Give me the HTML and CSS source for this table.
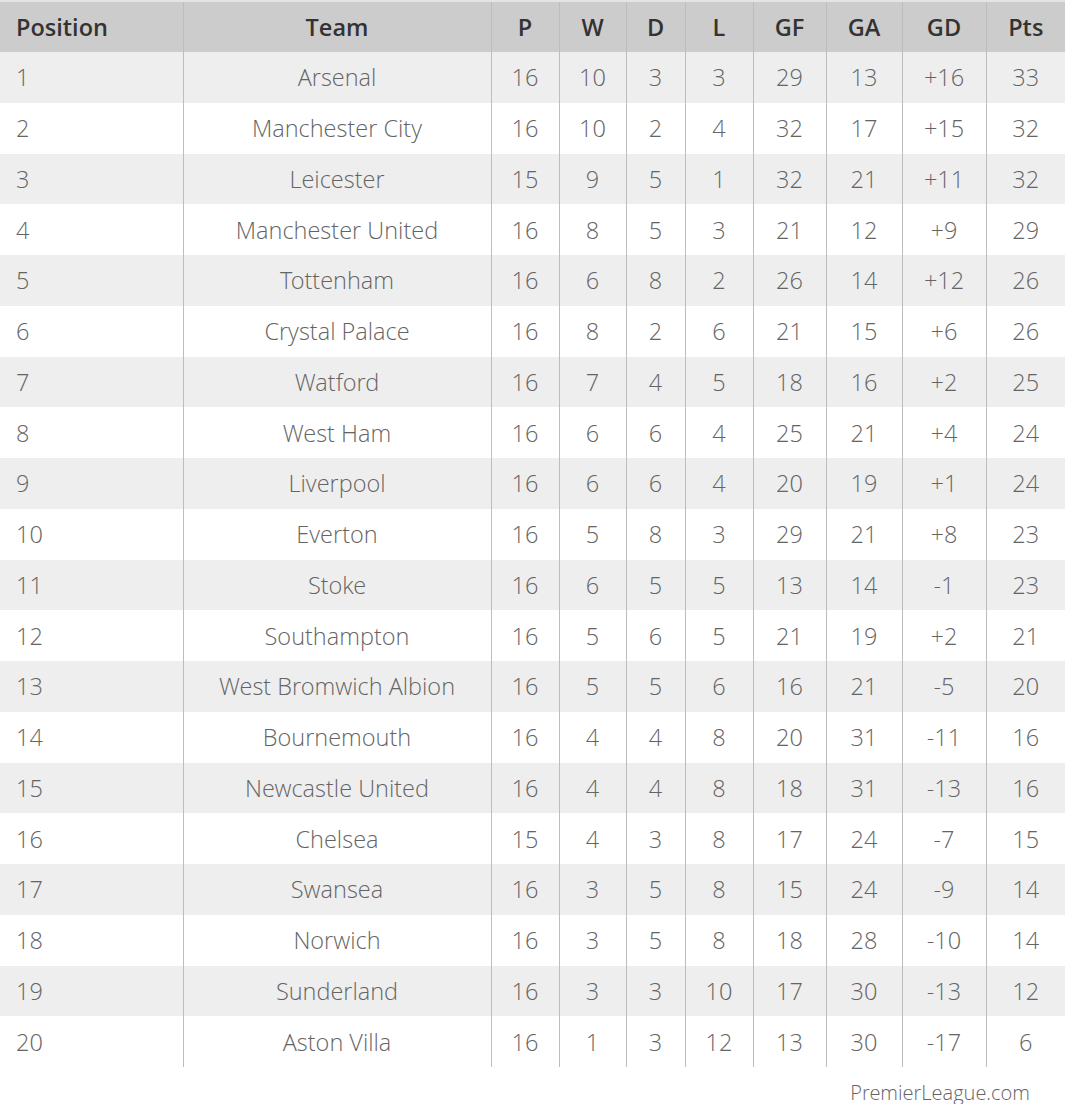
FILE: index.html
```html
<!DOCTYPE html>
<html>
<head>
<meta charset="utf-8">
<link rel="stylesheet" href="styles.css">
</head>
<body>
<table class="standings">
<colgroup>
<col class="c-pos"><col class="c-team"><col class="c-p"><col class="c-w"><col class="c-d"><col class="c-l"><col class="c-gf"><col class="c-ga"><col class="c-gd"><col class="c-pts">
</colgroup>
<thead>
<tr><th class="pos">Position</th><th>Team</th><th>P</th><th>W</th><th>D</th><th>L</th><th>GF</th><th>GA</th><th>GD</th><th>Pts</th></tr>
</thead>
<tbody>
<tr><td class="pos">1</td><td>Arsenal</td><td>16</td><td>10</td><td>3</td><td>3</td><td>29</td><td>13</td><td>+16</td><td>33</td></tr>
<tr><td class="pos">2</td><td>Manchester City</td><td>16</td><td>10</td><td>2</td><td>4</td><td>32</td><td>17</td><td>+15</td><td>32</td></tr>
<tr><td class="pos">3</td><td>Leicester</td><td>15</td><td>9</td><td>5</td><td>1</td><td>32</td><td>21</td><td>+11</td><td>32</td></tr>
<tr><td class="pos">4</td><td>Manchester United</td><td>16</td><td>8</td><td>5</td><td>3</td><td>21</td><td>12</td><td>+9</td><td>29</td></tr>
<tr><td class="pos">5</td><td>Tottenham</td><td>16</td><td>6</td><td>8</td><td>2</td><td>26</td><td>14</td><td>+12</td><td>26</td></tr>
<tr><td class="pos">6</td><td>Crystal Palace</td><td>16</td><td>8</td><td>2</td><td>6</td><td>21</td><td>15</td><td>+6</td><td>26</td></tr>
<tr><td class="pos">7</td><td>Watford</td><td>16</td><td>7</td><td>4</td><td>5</td><td>18</td><td>16</td><td>+2</td><td>25</td></tr>
<tr><td class="pos">8</td><td>West Ham</td><td>16</td><td>6</td><td>6</td><td>4</td><td>25</td><td>21</td><td>+4</td><td>24</td></tr>
<tr><td class="pos">9</td><td>Liverpool</td><td>16</td><td>6</td><td>6</td><td>4</td><td>20</td><td>19</td><td>+1</td><td>24</td></tr>
<tr><td class="pos">10</td><td>Everton</td><td>16</td><td>5</td><td>8</td><td>3</td><td>29</td><td>21</td><td>+8</td><td>23</td></tr>
<tr><td class="pos">11</td><td>Stoke</td><td>16</td><td>6</td><td>5</td><td>5</td><td>13</td><td>14</td><td>-1</td><td>23</td></tr>
<tr><td class="pos">12</td><td>Southampton</td><td>16</td><td>5</td><td>6</td><td>5</td><td>21</td><td>19</td><td>+2</td><td>21</td></tr>
<tr><td class="pos">13</td><td>West Bromwich Albion</td><td>16</td><td>5</td><td>5</td><td>6</td><td>16</td><td>21</td><td>-5</td><td>20</td></tr>
<tr><td class="pos">14</td><td>Bournemouth</td><td>16</td><td>4</td><td>4</td><td>8</td><td>20</td><td>31</td><td>-11</td><td>16</td></tr>
<tr><td class="pos">15</td><td>Newcastle United</td><td>16</td><td>4</td><td>4</td><td>8</td><td>18</td><td>31</td><td>-13</td><td>16</td></tr>
<tr><td class="pos">16</td><td>Chelsea</td><td>15</td><td>4</td><td>3</td><td>8</td><td>17</td><td>24</td><td>-7</td><td>15</td></tr>
<tr><td class="pos">17</td><td>Swansea</td><td>16</td><td>3</td><td>5</td><td>8</td><td>15</td><td>24</td><td>-9</td><td>14</td></tr>
<tr><td class="pos">18</td><td>Norwich</td><td>16</td><td>3</td><td>5</td><td>8</td><td>18</td><td>28</td><td>-10</td><td>14</td></tr>
<tr><td class="pos">19</td><td>Sunderland</td><td>16</td><td>3</td><td>3</td><td>10</td><td>17</td><td>30</td><td>-13</td><td>12</td></tr>
<tr><td class="pos">20</td><td>Aston Villa</td><td>16</td><td>1</td><td>3</td><td>12</td><td>13</td><td>30</td><td>-17</td><td>6</td></tr>
</tbody>
</table>
<div class="source">PremierLeague.com</div>
</body>
</html>
```
FILE: styles.css
```css
html, body {
  margin: 0;
  padding: 0;
  background: #ffffff;
}
body {
  font-family: "Open Sans", "Liberation Sans", sans-serif;
  width: 1070px;
}
.standings {
  width: 1065px;
  table-layout: fixed;
  border-collapse: collapse;
  border-top: 2px solid #e4e4e4;
}
.c-pos { width: 183px; }
.c-team { width: 308px; }
.c-p { width: 68px; }
.c-w { width: 67px; }
.c-d { width: 59px; }
.c-l { width: 68px; }
.c-gf { width: 73px; }
.c-ga { width: 76px; }
.c-gd { width: 84px; }
.c-pts { width: 79px; }
.standings th,
.standings td {
  padding: 0;
  text-align: center;
  border-left: 1px solid #bdbdbd;
  white-space: nowrap;
}
.standings th:first-child,
.standings td:first-child {
  border-left: none;
}
.standings th {
  height: 50px;
  background: #cccccc;
  color: #333333;
  font-weight: 600;
  font-size: 23.5px;
}
.standings td {
  height: 50.75px;
  color: #646464;
  font-family: "Open Sans Light", "Open Sans", "Liberation Sans", sans-serif;
  font-weight: 300;
  font-size: 23.5px;
}
.standings tbody tr:nth-child(odd) td {
  background: #eeeeee;
}
.standings .pos {
  text-align: left;
  padding-left: 16px;
}
.source {
  width: 1030px;
  text-align: right;
  font-family: "Open Sans Light", "Open Sans", "Liberation Sans", sans-serif;
  font-size: 20px;
  font-weight: 300;
  color: #646464;
  padding-top: 12px;
}
```
